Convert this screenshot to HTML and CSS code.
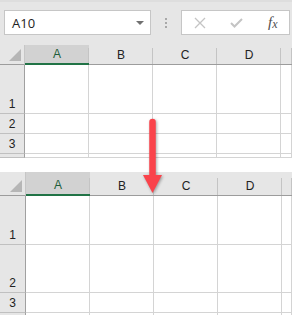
FILE: index.html
```html
<!DOCTYPE html>
<html lang="en">

<head>
 <meta charset="UTF-8">
 <title>Row height</title>
 <link rel="stylesheet" href="styles.css">
</head>

<body>
 <div class="page">

  <!-- formula bar -->
  <div class="bar">
   <div class="namebox">
    <span>A10</span>
    <span class="drop"></span>
   </div>
   <div class="grip"><i></i><i></i><i></i></div>
   <div class="fxbox">
    <svg class="ico" width="12" height="12" viewBox="0 0 12 12">
     <path d="M1 1 L11 11 M11 1 L1 11" stroke="#c4c4c4" stroke-width="1.3" fill="none" />
    </svg>
    <svg class="ico" width="13" height="10" viewBox="0 0 13 10">
     <path d="M1 5 L4.5 8.5 L12 1" stroke="#c4c4c4" stroke-width="2" fill="none" />
    </svg>
    <span class="fx">f<span class="x">x</span></span>
   </div>
  </div>

  <!-- before -->
  <div class="grid first">
   <div class="corner"><span class="tri"></span></div>
   <div class="colhead sel">A</div>
   <div class="colhead">B</div>
   <div class="colhead">C</div>
   <div class="colhead">D</div>
   <div class="colhead"></div>

   <div class="rowhead">1</div><div class="cell"></div><div class="cell"></div><div class="cell"></div><div class="cell"></div><div class="cell"></div>
   <div class="rowhead">2</div><div class="cell"></div><div class="cell"></div><div class="cell"></div><div class="cell"></div><div class="cell"></div>
   <div class="rowhead">3</div><div class="cell"></div><div class="cell"></div><div class="cell"></div><div class="cell"></div><div class="cell"></div>
   <div class="rowhead"></div><div class="cell"></div><div class="cell"></div><div class="cell"></div><div class="cell"></div><div class="cell"></div>
  </div>

  <!-- after -->
  <div class="grid second">
   <div class="corner"><span class="tri"></span></div>
   <div class="colhead sel">A</div>
   <div class="colhead">B</div>
   <div class="colhead">C</div>
   <div class="colhead">D</div>
   <div class="colhead"></div>

   <div class="rowhead">1</div><div class="cell"></div><div class="cell"></div><div class="cell"></div><div class="cell"></div><div class="cell"></div>
   <div class="rowhead">2</div><div class="cell"></div><div class="cell"></div><div class="cell"></div><div class="cell"></div><div class="cell"></div>
   <div class="rowhead">3</div><div class="cell"></div><div class="cell"></div><div class="cell"></div><div class="cell"></div><div class="cell"></div>
   <div class="rowhead"></div><div class="cell"></div><div class="cell"></div><div class="cell"></div><div class="cell"></div><div class="cell"></div>
  </div>

  <!-- red arrow over both sheets -->
  <svg class="arrow" width="26" height="82" viewBox="0 0 26 82">
   <line x1="12.5" y1="6" x2="12.5" y2="62" stroke="#fa434b" stroke-width="6.5" stroke-linecap="round" />
   <polygon points="3,59 22,59 12.5,77" fill="#fa434b" />
  </svg>

 </div>
</body>

</html>
```

FILE: styles.css
```css
body {
 margin: 0;
 background: #fff;
 font-family: "Liberation Sans", Arial, sans-serif;
}

.page {
 position: relative;
 width: 292px;
 height: 315px;
 overflow: hidden;
}

/* formula bar */
.bar {
 height: 45px;
 box-sizing: border-box;
 background: #e6e6e6;
 border-top: 2px solid #dedede;
 padding-top: 8px;
 display: flex;
 align-items: flex-start;
}

.namebox {
 margin-left: 4px;
 width: 147px;
 height: 25px;
 box-sizing: border-box;
 background: #fff;
 border: 1px solid #c6c6c6;
 display: flex;
 align-items: center;
 justify-content: space-between;
 padding: 0 6px 0 7px;
 font-family: "Open Sans", sans-serif;
 font-size: 13px;
 color: #222;
}

.drop {
 width: 0;
 height: 0;
 border-left: 4px solid transparent;
 border-right: 4px solid transparent;
 border-top: 4px solid #707070;
}

.grip {
 width: 30px;
 height: 25px;
 display: flex;
 flex-direction: column;
 align-items: center;
 justify-content: center;
 gap: 2px;
}

.grip i {
 width: 2px;
 height: 2px;
 background: #a8a8a8;
}

.fxbox {
 width: 109px;
 height: 25px;
 box-sizing: border-box;
 background: #fff;
 border: 1px solid #c6c6c6;
 display: flex;
 align-items: center;
 padding-left: 12px;
 gap: 24px;
}

.fx {
 margin-left: 1px;
 font-family: "Liberation Serif", serif;
 font-style: italic;
 font-size: 15px;
 color: #505050;
}

.fx .x {
 font-size: 12px;
 position: relative;
 top: 1px;
}

/* sheet grid */
.grid {
 display: grid;
 grid-template-columns: 25px 64px 64px 64px 64px 11px;
 font-size: 12px;
 color: #222;
}

.first {
 grid-template-rows: 20px 49px 20px 20px 4px;
}

.second {
 margin-top: 14px;
 grid-template-columns: 26px 64px 64px 64px 64px 10px;
 grid-template-rows: 24px 49px 48px 20px 4px;
}

.corner {
 background: #e6e6e6;
 border-bottom: 1px solid #9c9c9c;
 border-right: 1px solid #c6c6c6;
 display: flex;
 align-items: flex-end;
 justify-content: flex-end;
 padding: 0 3px 3px 0;
}

.tri {
 width: 0;
 height: 0;
 border-left: 12px solid transparent;
 border-bottom: 12px solid #b6b6b6;
}

.colhead {
 background: #e6e6e6 linear-gradient(#c4c4c4, #c4c4c4) right bottom / 1px calc(100% - 3px) no-repeat;
 border-bottom: 1px solid #9c9c9c;
 display: flex;
 align-items: center;
 justify-content: center;
}

.second .colhead {
 background-size: 1px calc(100% - 6px);
 padding-top: 4px;
}

.colhead.sel {
 background-color: #d2d2d2;
 border-bottom: 2px solid #217346;
 color: #1e5e3a;
}

.rowhead {
 background: #e6e6e6;
 border-right: 1px solid #a0a0a0;
 border-bottom: 1px solid #c0c0c0;
 display: flex;
 align-items: flex-end;
 justify-content: center;
 padding-bottom: 2px;
 box-sizing: border-box;
}

.cell {
 border-right: 1px solid #d4d4d4;
 border-bottom: 1px solid #d4d4d4;
}

.arrow {
 position: absolute;
 left: 140px;
 top: 116px;
 filter: drop-shadow(1px 1px 1.5px rgba(0, 0, 0, 0.35));
}
```
